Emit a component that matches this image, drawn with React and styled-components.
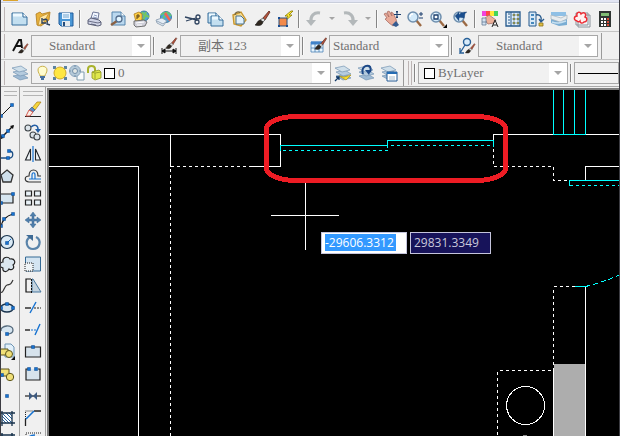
import React from 'react';
import styled, { createGlobalStyle } from 'styled-components';

const GlobalStyle = createGlobalStyle`
    * { box-sizing: border-box; }
    body { margin: 0; overflow: hidden; background: #f0f0f0; }
`;

const navy = '#1c3f6e';
const blue = '#1672d0';

/* shared icon pieces, all on an 18 x 18 grid */

const Sheet = ({ x = 1, y = 3, w = 15, h = 12 }) => (
    <g>
        <path d={ `M${x} ${y}h${w - 4}l4 4v${h - 4}h${-w}z` } fill="#c3dff0" stroke="#356c9b" />
        <path d={ `M${x + w - 4} ${y}v4h4` } fill="#fff" stroke="#356c9b" />
        <path d={ `M${x + 1} ${y + 2}h${w - 6}` } stroke="#eef9ff" strokeWidth="3" />
    </g>
);

const Brush = () => (
    <g>
        <path d="M16 1L10 8l2 2 5-8z" fill="#b5523a" stroke="#5a2a20" strokeWidth=".8" />
        <path d="M10 8l2 2-2 2-3-2z" fill="#ddd" stroke="#555" strokeWidth=".8" />
        <path d="M7 10l3 2c-1 4-4 4-8 3 2-1 2-4 5-5z" fill="#302820" stroke="#1b1b1b" strokeWidth=".6" />
    </g>
);

const Lens = () => (
    <g>
        <path d="M10 10l5 6" stroke="#9c6a44" strokeWidth="2.4" />
        <circle cx="7" cy="7" r="5" fill="#d3eafa" stroke="#6f8fae" strokeWidth="1.5" />
        <path d="M4 7c0-2 1-3 3-3" fill="none" stroke="#fff" strokeWidth="1.3" />
    </g>
);

const Layers = () => (
    <g stroke="#7595b3" strokeWidth=".7">
        <path d="M2 12l9-2 6 4-8 2z" fill="#9db9d3" />
        <path d="M2 8l9-2 6 4-8 2z" fill="#b5cbde" />
        <path d="M1 4l9-2 6 4-8 2z" fill="#cfdfea" />
    </g>
);

const Printer = () => (
    <g>
        <path d="M5 8l2-6 6 1-1 6z" fill="#f3f7ff" stroke="#626b8d" strokeWidth=".9" />
        <path d="M8 5l3 1M7 7l4 1" stroke="#7487b1" strokeWidth=".8" />
        <path d="M2 10l3-2 8 2 2 2v3l-3 1-10-2z" fill="#d0d4e6" stroke="#50566e" strokeWidth=".9" />
        <path d="M2 11l10 2 3-1M5 14l5 1" fill="none" stroke="#50566e" strokeWidth=".8" />
    </g>
);

const Grid = ({ x, y }) => (
    <g fill="#e8f5fe" stroke="#4a80b5" strokeWidth=".8">
        <path d={ `M${x} ${y}h12v10H${x}z` } />
        <path d={ `M${x} ${y + 1}h12` } strokeWidth="3" stroke="#3f83cc" />
        <path d={ `M${x} ${y + 6}h12M${x + 4} ${y}v10M${x + 8} ${y}v10` } />
    </g>
);

const Node = ({ x, y }) => <path d={ `M${x - 1.5} ${y - 1.5}h3v3h-3z` } fill={ blue } stroke="#0a4588" strokeWidth=".5" />;

const icons = {
    create: <Sheet />,
    open: (
        <g>
            <path d="M2 4l4-2 2 2 8-2-1 8-8 6-4-1z" fill="#e8b23c" stroke="#b07a1c" strokeWidth=".8" />
            <path d="M6 7l9-4-5 9-6 4z" fill="#ffe7a5" stroke="#c28f2c" strokeWidth=".8" />
            <path d="M9 10c4-2 5 0 4 4l3 1M8 8v5h4" fill="none" stroke="#2d4260" strokeWidth="1.4" />
        </g>
    ),
    save: (
        <g>
            <path d="M2 3h14v13H4l-2-2z" fill="#4a97d6" stroke="#205c9c" />
            <path d="M5 3h8v6H5z" fill="#e8f4ff" />
            <path d="M6 5h6M6 7h6" stroke="#72a6cf" />
            <path d="M5 11h8v5H5z" fill="#e4eaee" />
            <path d="M6 12h2v4H6z" fill="#244d7d" />
        </g>
    ),
    print: <Printer />,
    preview: (
        <g>
            <path d="M3 2h9l4 4v9H3z" fill="#bad8ef" stroke="#5584ac" />
            <path d="M12 2v4h4" fill="#fff" stroke="#5584ac" />
            <path d="M8 11l-6 4" stroke="#8a6144" strokeWidth="2.4" />
            <circle cx="10" cy="9" r="3" fill="#e2f5ff" stroke="#536d8d" strokeWidth="1.3" />
        </g>
    ),
    publish: (
        <g>
            <circle cx="12" cy="6" r="5" fill="#4fa9d2" stroke="#2f6795" strokeWidth=".8" />
            <path d="M10 2l3 4-2 4M14 2l-1 3 4 2" stroke="#75c561" strokeWidth="2" fill="none" />
            <path d="M2 4l5-2 3 2v6l-6 2z" fill="#ffcf45" stroke="#ae7d20" strokeWidth=".8" />
            <path d="M5 5v4M5 5h2v2H5" stroke="#5c431a" fill="none" />
            <path d="M2 11l10-1 3 2-2 4-9 1-2-2z" fill="#d0d0da" stroke="#555" strokeWidth=".8" />
            <path d="M4 13l8-1M5 15h5" stroke="#fff" />
        </g>
    ),
    dwf: (
        <g>
            <circle cx="11" cy="7" r="5.5" fill="#4aa5da" stroke="#2f6795" strokeWidth=".8" />
            <path d="M6 5c4-4 8-3 10 1M8 12c0-5 2-8 5-10" stroke="#62cc6c" strokeWidth="1.6" fill="none" />
            <path d="M9 4l2-2 5 8-2 1z" fill="#ef6552" />
            <path d="M1 10l6-2 5 3-4 5-6-3z" fill="#e4ecf5" stroke="#8295a9" strokeWidth=".8" />
            <path d="M2 11l6 3 4-3" fill="none" stroke="#8295a9" strokeWidth=".8" />
        </g>
    ),
    cut: (
        <g fill="none" stroke="#314561" strokeWidth="1.3">
            <path d="M1 7l12 3M2 11l10-3" />
            <circle cx="14" cy="7" r="2" />
            <circle cx="13" cy="12" r="2" />
        </g>
    ),
    copy: <g><Sheet x={ 1 } y={ 3 } w={ 12 } h={ 10 } /><Sheet x={ 4 } y={ 6 } w={ 12 } h={ 10 } /></g>,
    paste: (
        <g>
            <path d="M3 5l8-3 5 8-5 6-7-2z" fill="#f7dd94" stroke="#c9972f" strokeWidth="1.4" />
            <path d="M6 6h5l3 3v5H6z" fill="#e2f1fc" stroke="#49708f" />
            <path d="M5 5c0-3 4-4 5-2" fill="none" stroke="#7b6a41" strokeWidth="1.4" />
        </g>
    ),
    match: <Brush />,
    block: (
        <g>
            <path d="M15 1L9 6h3l-3 5 7-6h-3l4-4z" fill="#ffed30" stroke="#897800" strokeWidth=".8" />
            <path d="M3 8h8v8H3z" fill="#f38a4a" stroke="#294d78" />
            <path d="M2 7h2v2H2zM10 15h2v2h-2zM2 15h2v2H2z" fill="#174c93" />
        </g>
    ),
    undo: (
        <g>
            <path d="M15 3C9 2 5 6 6 12" fill="none" stroke="#b3b8ba" strokeWidth="3" />
            <path d="M1 10l5 6 5-6z" fill="#b3b8ba" />
        </g>
    ),
    redo: (
        <g>
            <path d="M3 3c6-1 10 3 9 9" fill="none" stroke="#b3b8ba" strokeWidth="3" />
            <path d="M17 10l-5 6-5-6z" fill="#b3b8ba" />
        </g>
    ),
    pan: (
        <g>
            <path d="M1 4l2-1 3 4-2-5 2-1 3 5-1-4 2 1 3 6 1 4-4 3-4-3-4-4 2-1z" fill="#e8aa98" stroke="#a3635a" strokeWidth=".7" />
            <path d="M9 15l4-4 3 4-3 2z" fill="#355b90" />
            <path d="M14 1v7M11 4.500h7M14 1l-1 1h2zM14 8l-1-1h2z" stroke={ navy } fill={ navy } />
        </g>
    ),
    zoom: <g><Lens /><path d="M13 4h4M15 2v4M13 8h4" stroke={ navy } /></g>,
    zoomWindow: <g><Lens /><path d="M5 5h4v4H5z" fill="#fff" stroke={ navy } strokeWidth="1.3" /><path d="M18 14v4h-4z" fill="#000" /></g>,
    zoomBack: (
        <g>
            <Lens />
            <path d="M3 6l4-4v3c2-3 5-3 8-3-3 1-2 5-3 6-2 0-3-1-5 0v3z" fill="#1a4e8e" stroke="#153766" strokeWidth=".3" />
        </g>
    ),
    properties: (
        <g>
            <path d="M1 1h4v5H1z" fill="#f044dd" /><path d="M5 1h4v5H5z" fill="#ff4646" />
            <path d="M9 1h4v5H9z" fill="#ffe738" /><path d="M13 1h4v5h-4z" fill="#42d45b" />
            <path d="M3 9l5-4 7 5-2 3-6 1z" fill="#edb19a" stroke="#a3746b" strokeWidth=".8" />
            <path d="M1 8h4v7H1zM1 12h5" fill="#d4e2f0" stroke="#657c95" strokeWidth=".8" />
            <path d="M11 17l3-7 3 7M12 15h4" fill="none" stroke="#222" />
        </g>
    ),
    center: (
        <g>
            <path d="M2 2h14v14H2z" fill="#e6f1fa" stroke="#24588c" strokeWidth="1.3" />
            <path d="M7 2v14" stroke="#24588c" />
            <path d="M4 4h2M4 7h2M4 10h2M4 13h2" stroke="#24588c" />
            <path d="M9 4h2v2H9zM13 4h2v2h-2zM9 8h2v2H9zM13 8h2v2h-2zM9 12h2v2H9zM13 12h2v2h-2z" fill="#d8bd2a" stroke="#385c77" strokeWidth=".6" />
        </g>
    ),
    palettes: (
        <g>
            <path d="M2 2h7v14H2z" fill="#d8e9f7" stroke="#24588c" />
            <path d="M4 4h3v2H4zM4 8h3v2H4zM4 12h3v2H4z" fill="#4588bd" />
            <path d="M9 5c4-1 6 2 5 6m-2-2l2 3 3-3" fill="none" stroke="#285b8f" strokeWidth="1.4" />
            <path d="M12 13h4v3h-4z" fill="#e0be44" stroke="#8a721a" strokeWidth=".8" />
        </g>
    ),
    sheets: (
        <g>
            <path d="M1 2h15v4H1z" fill="#8fc0e6" />
            <path d="M1 7l9 3 7-2v7l-8 1-8-3z" fill="#7aadd3" />
            <path d="M1 5l10 3 6-3v4l-7 3-9-3z" fill="#e9ecee" stroke="#a3b2bc" strokeWidth=".7" />
            <path d="M2 12c5 2 8 1 14-1" stroke="#c8e0f0" strokeWidth="1.5" fill="none" />
        </g>
    ),
    markup: (
        <g>
            <path d="M5 5h12v12H5zM3 3h12v12H3z" fill="#f3f5f7" stroke="#8a9299" />
            <path d="M4 11C0 10 1 6 4 6c-1-4 3-5 4-2 3-3 6 0 4 3 3 1 2 5-1 5-2 2-4 1-4-1-1 1-2 1-3 0z" fill="#fff0ef" stroke="#ed2a32" strokeWidth="1.4" />
        </g>
    ),
    calc: (
        <g>
            <path d="M3 1h12v16H3z" fill="#303634" />
            <path d="M5 3h8v3H5z" fill="#80be75" />
            <path d="M5 9h8M5 12h8M5 15h8" stroke="#fff" strokeWidth="2" strokeDasharray="2 1" />
            <path d="M12 8v8" stroke="#d94b37" strokeWidth="2" strokeDasharray="2 1" />
        </g>
    ),
    textStyle: (
        <g>
            <path d="M2 14L8 3h2l1 8M5 9h6" fill="none" stroke="#111" strokeWidth="1.9" />
            <g transform="translate(6 6) scale(.65)"><Brush /></g>
        </g>
    ),
    dimStyle: (
        <g>
            <path d="M2 11v6M16 11v6M2 14h14M2 14l3-2v4zM16 14l-3-2v4z" fill="#111" stroke="#111" />
            <g transform="translate(4 0) scale(.75)"><Brush /></g>
        </g>
    ),
    tableStyle: <g><Grid x={ 2 } y={ 5 } /><g transform="translate(4 0) scale(.8)"><Brush /></g></g>,
    leaderStyle: (
        <g>
            <circle cx="9" cy="5" r="3.500" fill="#d8ebfa" stroke="#286098" strokeWidth="1.4" />
            <path d="M7 8l-5 8h4M2 11v5" fill="none" stroke="#286098" strokeWidth="1.3" />
            <g transform="translate(6 6) scale(.65)"><Brush /></g>
        </g>
    ),
    layers: <Layers />,
    layerCurrent: (
        <g>
            <Layers />
            <path d="M5 12l5 1 7-2-5 5z" fill="#f5da30" stroke="#a58a08" strokeWidth=".6" />
            <path d="M1 17l4-4M2 13h3v3" fill="none" stroke="#123968" strokeWidth="1.3" />
        </g>
    ),
    layerPrevious: (
        <g>
            <Layers />
            <path d="M6 10C4 4 8 1 12 2c2 1 2 4 1 6" fill="none" stroke="#1c4887" strokeWidth="2" />
            <path d="M8 6h6l-2 5z" fill="#1c4887" />
        </g>
    ),
    layerStates: (
        <g>
            <Layers />
            <path d="M7 8h10v9H7z" fill="#fff" stroke="#245a94" />
            <path d="M7 9h10" stroke="#256cb3" strokeWidth="2" />
            <path d="M9 13h6M9 15h6" stroke="#a9bccb" />
        </g>
    ),
    bulb: (
        <g>
            <path d="M6 12c0-2-2-3-2-6 0-5 9-5 9 0 0 3-2 4-2 6z" fill="#fffccf" stroke="#c9b04a" />
            <path d="M6 13h5M7 15h3" stroke="#4771a0" strokeWidth="2" />
        </g>
    ),
    sun: (
        <g>
            <path d="M2 2h3v3H2zM13 2h3v3h-3zM2 13h3v3H2zM13 13h3v3h-3z" fill="#5c83a0" />
            <circle cx="9" cy="9" r="6" fill="#ffe742" stroke="#d0aa2c" />
        </g>
    ),
    freeze: (
        <g>
            <path d="M9 8h7v8H9z" fill="#f9fbfc" stroke="#7f9caf" />
            <circle cx="7" cy="7" r="5.500" fill="#b5cad9" stroke="#8fa9c0" />
            <circle cx="7" cy="7" r="2.500" fill="#e2e7e5" stroke="#7490aa" />
            <path d="M7 1v2M7 11v2M1 7h2M11 7h2" stroke="#7490aa" />
        </g>
    ),
    lock: (
        <g>
            <path d="M3 9V5c0-4 7-4 7 0v3" fill="none" stroke="#a9b22c" strokeWidth="2" />
            <path d="M7 8l7-2 2 2v6l-6 2-3-2z" fill="#e0e84c" stroke="#8d9524" strokeWidth=".8" />
            <path d="M10 9v6M7 8l3 1 6-1" fill="none" stroke="#8d9524" strokeWidth=".8" />
        </g>
    ),
    line: <g><path d="M2 16L15 3" stroke="#111" /><Node x={ 3 } y={ 15 } /><Node x={ 14 } y={ 4 } /></g>,
    xline: (
        <g>
            <path d="M2 16L15 3" stroke="#111" strokeWidth="1.3" />
            <path d="M16 2l-4 1 3 3zM2 16l1-4 3 3z" fill="#111" />
            <Node x={ 10 } y={ 8 } /><Node x={ 5 } y={ 13 } />
        </g>
    ),
    polyline: (
        <g>
            <path d="M1 13h10c5 0 5-7 0-7" fill="none" stroke="#1b4e85" strokeWidth="1.3" />
            <Node x={ 10 } y={ 13 } /><Node x={ 11 } y={ 6 } />
        </g>
    ),
    polygon: <path d="M9 3l6 5-2 7H5L3 8z" fill="#cfdfeb" stroke="#333" strokeWidth="1.3" />,
    rect: <g><path d="M2 5h13v9H2z" fill="#d6e5f0" stroke="#222" strokeWidth="1.2" /><Node x={ 15 } y={ 5 } /><Node x={ 3 } y={ 14 } /></g>,
    arc: <g><path d="M3 16C4 9 8 5 15 3" fill="none" stroke="#111" strokeWidth="1.2" /><Node x={ 3 } y={ 15 } /><Node x={ 6 } y={ 8 } /><Node x={ 15 } y={ 3 } /></g>,
    circle: <g><circle cx="9" cy="9" r="6.500" fill="#dbeaf5" stroke="#17324c" strokeWidth="1.2" /><path d="M9 10l4-4" stroke={ blue } /><Node x={ 9 } y={ 10 } /></g>,
    cloud: <path d="M3 12C0 10 3 7 5 7c-1-5 5-6 7-3 5-1 6 4 3 6 2 3-1 6-4 4-2 4-7 3-6-1z" fill="#dae6ef" stroke="#222" strokeWidth="1.2" />,
    spline: <path d="M2 14c3 5 4-5 7-6s3 1 6-5" fill="none" stroke="#333" strokeWidth="1.2" />,
    ellipse: <g><ellipse cx="9" cy="9" rx="6.500" ry="4" fill="#d6e5f0" stroke="#17324c" strokeWidth="1.3" /><Node x={ 9 } y={ 5 } /><Node x={ 3 } y={ 9 } /><Node x={ 15 } y={ 9 } /></g>,
    ellipseArc: <g><path d="M3 10c-1-6 12-7 12-1 0 3-3 4-6 4" fill="#d6e5f0" stroke="#556a7c" strokeWidth="1.3" /><Node x={ 9 } y={ 13 } /></g>,
    insert: (
        <g>
            <path d="M7 1h6l3 3v10H7z" fill="#e2f0fa" stroke="#6d94b3" />
            <path d="M2 6h8v6H2z" fill="#f1e078" stroke="#5c551b" />
            <circle cx="11" cy="11" r="3.500" fill="#f1e078" stroke="#5c551b" />
            <path d="M17 13v4h-4z" fill="#111" />
        </g>
    ),
    makeBlock: <g><path d="M2 4h9v7H2z" fill="#f1e078" stroke="#5c551b" /><circle cx="12" cy="12" r="3.700" fill="#f1e078" stroke="#5c551b" /><Node x={ 4 } y={ 10 } /></g>,
    point: <Node x={ 9 } y={ 9 } />,
    hatch: (
        <g>
            <path d="M4 4h10v10H4z" fill="#fff" />
            <path d="M4 7l7 7M4 10l4 4M5 5l9 9M8 4l6 6M11 4l3 3" stroke="#28639d" />
            <path d="M4 2v15M14 2v15M1 4h16M1 14h16" stroke="#17324c" strokeWidth="1.3" />
        </g>
    ),
    gradient: <path d="M4 2v15M14 2v15M1 4h16" stroke="#17324c" strokeWidth="1.5" />,
    erase: (
        <g>
            <path d="M1 15.500h16" stroke="#222" />
            <path d="M13 1h4l-6 8-3-2z" fill="#f6d63c" stroke="#a37a14" strokeWidth=".7" />
            <path d="M8 6l3 3-2 2-4-2z" fill="#5c8dc4" stroke="#3b5e89" strokeWidth=".7" />
            <path d="M5 9l4 2-3 4H2z" fill="#f8efe8" stroke="#d0493f" strokeWidth=".9" />
        </g>
    ),
    duplicate: (
        <g fill="#dce4ea" stroke="#40464b" strokeWidth="1.1">
            <circle cx="4" cy="5" r="3" /><circle cx="9" cy="12" r="3" /><circle cx="13" cy="14" r="3" />
            <path d="M7 4c3-3 7-2 7 2" fill="none" stroke="#245fa5" strokeWidth="1.5" />
            <path d="M11 6h6l-3 4z" fill="#245fa5" stroke="none" />
        </g>
    ),
    mirror: <g><path d="M6.500 4v11h-5zM11.500 4v11h5z" fill="#eef3f6" stroke="#22262b" strokeWidth="1.1" /><path d="M9 1v16" stroke={ blue } strokeWidth="1.2" /></g>,
    offset: (
        <g fill="none" strokeWidth="1.2">
            <path d="M17 15H5c-5 0-5-6 0-6 0-8 9-8 9 0h3" stroke="#333" />
            <path d="M17 12H5M8 12V8c0-3 3-3 3 0v4" stroke={ blue } />
        </g>
    ),
    array: <path d="M1.500 2h6v5h-6zM10.500 2h6v5h-6zM1.500 11h6v5h-6zM10.500 11h6v5h-6z" fill="#e9f2f8" stroke="#222" strokeWidth="1.2" />,
    move: <path d="M9 1l3 4h-2v3h3V6l4 3-4 3v-2h-3v3h2l-3 4-3-4h2v-3H5v2L1 9l4-3v2h3V5H6z" fill="#4f7eaa" stroke="#3f6b95" strokeWidth=".5" />,
    rotate: <g><path d="M6 4c-6 4-3 12 3 12 7 0 9-9 3-12" fill="none" stroke="#5a84aa" strokeWidth="2.2" /><path d="M2 2h7v6z" fill="#3f6b95" /></g>,
    scale: <g><path d="M1.500 2h15v14h-15z" fill="#d3e4f1" stroke="#346a95" /><path d="M1 8h8v8H1z" fill="#eef3f6" stroke="#222" strokeDasharray="1 1" /></g>,
    stretch: <g><path d="M8 2h1l8 13H8z" fill="#c5d4df" stroke="#47779e" /><path d="M7 2H2v13h5" fill="none" stroke="#111" strokeWidth="1.2" /><path d="M7.500 2v14" stroke="#111" strokeDasharray="2 1" /></g>,
    trim: <g><path d="M1 9h6" stroke="#222" strokeWidth="1.4" /><path d="M10 9h7" stroke="#222" strokeDasharray="2 1" /><path d="M6 14L12 3" stroke={ blue } strokeWidth="1.4" /></g>,
    extend: <g><path d="M1 9h5" stroke="#222" strokeWidth="1.4" /><path d="M7 9h5" stroke={ blue } strokeDasharray="2 1" /><path d="M11 14l5-11" stroke={ blue } strokeWidth="1.4" /></g>,
    breakPoint: <g><path d="M1.500 4h15v10h-15z" fill="#d7e3ec" stroke="#222" strokeWidth="1.2" /><Node x={ 9 } y={ 4 } /></g>,
    breakTwo: <g><path d="M2 4h14v11H2z" fill="#d7e3ec" /><path d="M4 4H2v11h14V4h-2" fill="none" stroke="#222" strokeWidth="1.2" /><Node x={ 5 } y={ 4 } /><Node x={ 12 } y={ 4 } /></g>,
    join: <g><path d="M1 9h16" stroke="#222" strokeWidth="1.2" /><path d="M5 5l4 4-4 4zM13 5L9 9l4 4z" fill="#3d5a80" /></g>,
    chamfer: <g><path d="M1.500 17v-7M10 2h7" stroke="#222" strokeWidth="1.3" /><path d="M1.500 10V2h8" fill="none" stroke="#222" strokeDasharray="1 1" /><path d="M2 10l8-8" stroke={ blue } strokeWidth="1.6" /></g>,
    fillet: <g><path d="M2 8V2h15" fill="none" stroke="#222" strokeDasharray="1 1" /><path d="M3 10c1-5 4-6 8-6" fill="none" stroke={ blue } strokeWidth="1.6" /></g>
};

const Glyph = styled.svg`
    display: block;
    flex: none;
    width: 18px;
    height: 18px;
`;

const Icon = ({ name }) => <Glyph viewBox="0 0 18 18" aria-hidden="true">{ icons[name] }</Glyph>;

const Page = styled.div`
    display: flex;
    flex-direction: column;
    height: 100vh;
    border: solid #3c3c42;
    border-width: 0 1px;
    background: #f0f0f0;
    font: 13px/16px "Liberation Serif", "Noto Sans CJK SC", serif;
    color: #707070;
`;

const TitleEdge = styled.div`
    flex: none;
    height: 4px;
    padding-left: 2px;
    background: linear-gradient(#e2e5f3 2px, #c9cedb 2px, #c9cedb 3px, #fafafa 3px);
`;

const AppMark = styled.div`
    width: 15px;
    height: 1px;
    background: #dba32b;
`;

const ToolRow = styled.div`
    display: flex;
    flex: none;
    align-items: center;
    height: ${ ({ $last }) => $last ? 27 : 28 }px;
    padding-top: ${ ({ $first }) => $first ? 2 : 0 }px;
    padding-left: 3px;
    border-bottom: 1px solid ${ ({ $last }) => $last ? '#a9a9a9' : '#c4c4c4' };
    overflow: hidden;
`;

const Grip = styled.span`
    flex: none;
    width: 4px;
    height: 24px;
    border: solid #bdb5b5;
    border-width: 0 ${ ({ $double }) => $double ? 1 : 0 }px 0 1px;
`;

const Tools = styled.div`
    display: flex;
    flex: none;
    align-items: center;
    height: 26px;
    padding-right: 3px;
    border-right: 1px solid #9a9a9a;
    margin-right: 4px;
`;

const ToolButton = styled.button`
    display: flex;
    flex: none;
    align-items: center;
    justify-content: center;
    width: ${ ({ $width = 23 }) => $width }px;
    height: 22px;
    padding: 0;
    border: 0;
    background: none;
`;

const Separator = styled.span`
    flex: none;
    width: 2px;
    height: 18px;
    margin: 0 2px;
    border-left: 1px solid #858585;
    border-right: 1px solid #fafafa;
`;

const Combo = styled.label`
    display: flex;
    flex: ${ ({ $width }) => $width ? `0 0 ${$width}px` : '1 1 0' };
    align-items: center;
    height: 22px;
    padding-left: ${ ({ $indent = 3 }) => $indent }px;
    border: 1px solid #a8a8a8;
    overflow: hidden;
    background: #f1f1f1;
`;

const Select = styled.select`
    flex: 1;
    min-width: 0;
    height: 18px;
    padding: 0;
    border: 0;
    appearance: none;
    background: none;
    color: inherit;
    font: inherit;
`;

const LineSelect = styled(Select)`
    background: linear-gradient(#000, #000) center / 100% 1px no-repeat;
`;

const Drop = styled.span`
    display: flex;
    flex: none;
    align-items: center;
    justify-content: center;
    align-self: stretch;
    width: 18px;
    background: #fff;
`;

const Arrow = styled.span`
    border: solid transparent;
    border-width: ${ ({ $small }) => $small ? 3 : 4 }px;
    border-bottom-width: 0;
    border-top-color: #a5a5a5;
`;

const Swatch = styled.span`
    flex: none;
    width: 11px;
    height: 11px;
    margin: 0 3px 0 2px;
    border: 1px solid #000;
    background: #fff;
`;

const Workspace = styled.div`
    display: flex;
    flex: 1;
    min-height: 0;
`;

const Palette = styled.div`
    display: flex;
    flex: none;
    flex-direction: column;
    align-items: flex-end;
    width: ${ ({ $width }) => $width }px;
    padding-right: 1px;
    border-right: 1px solid #a0a0a0;
    overflow: hidden;
`;

const PaletteGrip = styled.span`
    flex: none;
    align-self: stretch;
    height: 5px;
    margin: 4px 1px 3px 3px;
    border: solid #b4b4b4;
    border-width: 1px 0;
`;

const Canvas = styled.div`
    position: relative;
    flex: 1;
    min-width: 0;
    margin: 1px 0 0 1px;
    border: solid #7c7c7c;
    border-width: 2px 0 0 2px;
    background: #000;
    overflow: hidden;
`;

const Plan = styled.svg`
    display: block;
    width: 100%;
    height: 100%;
`;

const Coordinates = styled.div`
    position: absolute;
    left: 272px;
    top: 142px;
    display: flex;
    gap: 3px;
`;

const Coordinate = styled.input`
    width: ${ ({ $active }) => $active ? 86 : 81 }px;
    height: 22px;
    padding: ${ ({ $active }) => $active ? '1px 10px 2px 3px' : '1px 3px 2px' };
    border: 1px solid #c4c4dc;
    border-radius: 0;
    outline: 0;
    background: ${ ({ $active }) => $active
        ? 'linear-gradient(#3399ff, #3399ff) content-box, #fff'
        : '#17135a' };
    color: ${ ({ $active }) => $active ? '#fff' : '#c9c9dc' };
    font: 12px/17px "Open Sans", sans-serif;
`;

const tool = (name, width) => (
    <ToolButton key={ name } type="button" aria-label={ name } $width={ width }>
        <Icon name={ name } />
    </ToolButton>
);

const Dropdown = ({ label, value, width, indent, children }) => (
    <Combo $width={ width } $indent={ indent }>
        { children }
        <Select aria-label={ label }><option>{ value }</option></Select>
        <Drop><Arrow /></Drop>
    </Combo>
);

const standardGroups = [
    ['create', 'open', 'save'],
    ['print', 'preview', 'publish', 'dwf'],
    ['cut', 'copy', 'paste', 'match', 'block'],
    ['undo', 'redo'],
    ['pan', 'zoom', 'zoomWindow', 'zoomBack'],
    ['properties', 'center', 'palettes', 'sheets', 'markup', 'calc']
];

const styleLists = [
    { name: 'textStyle', value: 'Standard', indent: 17 },
    { name: 'dimStyle', value: '副本 123', indent: 17 },
    { name: 'tableStyle', value: 'Standard', indent: 3 },
    { name: 'leaderStyle', value: 'Standard', indent: 17 }
];

const drawTools = ['line', 'xline', 'polyline', 'polygon', 'rect', 'arc', 'circle', 'cloud',
    'spline', 'ellipse', 'ellipseArc', 'insert', 'makeBlock', 'point', 'hatch', 'gradient'];
const modifyTools = ['erase', 'duplicate', 'mirror', 'offset', 'array', 'move', 'rotate', 'scale',
    'stretch', 'trim', 'extend', 'breakPoint', 'breakTwo', 'join', 'chamfer', 'fillet'];

const FloorPlan = () => (
    <Plan aria-label="Floor plan">
        <g transform="translate(-48.5 -89.5)" fill="none" stroke="#fff" shapeRendering="crispEdges">
            <path d="M553.5 363.5h32V4000h-32z" fill="#adadad" stroke="none" />
            <path d="M40 134H280V166H248M170 134V166M40 166H138V4000" />
            <path d="M493 140V134H4000M4000 166H585V180M585 286V4000M553 370V4000" />
            <path
                d="M170 166H248M170 168V4000M493 148V166H553V180H569M574 286H553V370H497V4000"
                strokeDasharray="3 3"
            />
            <path d="M270 215H338M305 182V249" />
            <g stroke="#00ffff">
                <path d="M280 150V145H387M387 147V140H493V146" />
                <path d="M553 80V134H585V80M563 80V134M574 80V134M569 185V180H4000M574 286H584" />
                <path d="M282 150H388M390 145H493M569 185H4000" strokeDasharray="3 3" />
                <path d="M585 286Q602 282 620 274" strokeDasharray="5 3" />
            </g>
            <circle cx="525" cy="405" r="19" />
            <path d="M522 435h4" stroke="#888" />
            <rect x="266" y="116" width="239" height="64" rx="30" ry="12" stroke="#ed1c24" strokeWidth="5" />
        </g>
    </Plan>
);

const App = () => (
    <Page>
        <GlobalStyle />
        <TitleEdge><AppMark /></TitleEdge>
        <ToolRow $first>
            <Grip />
            { standardGroups.map((names, index) => (
                <React.Fragment key={ index }>
                    { index > 0 && <Separator /> }
                    { names.map(name => name === 'undo' || name === 'redo' ? (
                        <React.Fragment key={ name }>
                            { tool(name, 24) }
                            <ToolButton type="button" aria-label={ `${name} list` } $width={ 12 }>
                                <Arrow $small />
                            </ToolButton>
                        </React.Fragment>
                    ) : tool(name)) }
                </React.Fragment>
            )) }
        </ToolRow>
        <ToolRow>
            <Grip />
            <Tools>
                { styleLists.map(({ name, value, indent }, index) => (
                    <React.Fragment key={ name }>
                        { index > 0 && <Separator /> }
                        { tool(name) }
                        <Dropdown label={ name } value={ value } width={ 120 } indent={ indent } />
                    </React.Fragment>
                )) }
            </Tools>
        </ToolRow>
        <ToolRow $last>
            <Grip />
            <Tools>
                { tool('layers') }
                <Dropdown label="Layer" value="0" width={ 300 } indent={ 2 }>
                    { ['bulb', 'sun', 'freeze', 'lock'].map(name => (
                        <ToolButton key={ name } as="span" $width={ 17 }><Icon name={ name } /></ToolButton>
                    )) }
                    <Swatch />
                </Dropdown>
                { ['layerCurrent', 'layerPrevious', 'layerStates'].map(name => tool(name)) }
            </Tools>
            <Grip $double />
            <Separator />
            <Dropdown label="Color" value="ByLayer" width={ 150 }><Swatch /></Dropdown>
            <Separator />
            <Combo><LineSelect aria-label="Linetype" /></Combo>
        </ToolRow>
        <Workspace>
            <Palette $width={ 19 }>
                <PaletteGrip />
                { drawTools.map(name => tool(name, 22)) }
            </Palette>
            <Palette $width={ 26 }>
                <PaletteGrip />
                { modifyTools.map(name => tool(name, 22)) }
            </Palette>
            <Canvas>
                <FloorPlan />
                <Coordinates>
                    <Coordinate $active aria-label="X" defaultValue="-29606.3312" />
                    <Coordinate aria-label="Y" defaultValue="29831.3349" />
                </Coordinates>
            </Canvas>
        </Workspace>
    </Page>
);

export default App;
